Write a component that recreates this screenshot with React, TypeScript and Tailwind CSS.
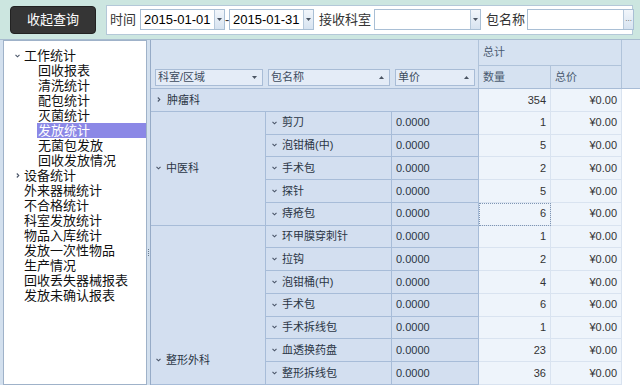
import React from "react";

type TreeNode = { label: string; open?: boolean; closed?: boolean; children?: string[] };

const tree: TreeNode[] = [
  {
    label: "工作统计",
    open: true,
    children: ["回收报表", "清洗统计", "配包统计", "灭菌统计", "发放统计", "无菌包发放", "回收发放情况"],
  },
  { label: "设备统计", closed: true },
  { label: "外来器械统计" },
  { label: "不合格统计" },
  { label: "科室发放统计" },
  { label: "物品入库统计" },
  { label: "发放一次性物品" },
  { label: "生产情况" },
  { label: "回收丢失器械报表" },
  { label: "发放未确认报表" },
];

const selected = "发放统计";

type Row = { name: string; qty: number; focus?: boolean };

const groups: { dept: string; rows: Row[] }[] = [
  {
    dept: "中医科",
    rows: [
      { name: "剪刀", qty: 1 },
      { name: "泡钳桶(中)", qty: 5 },
      { name: "手术包", qty: 2 },
      { name: "探针", qty: 5 },
      { name: "痔疮包", qty: 6, focus: true },
    ],
  },
  {
    dept: "整形外科",
    rows: [
      { name: "环甲膜穿刺针", qty: 1 },
      { name: "拉钩", qty: 2 },
      { name: "泡钳桶(中)", qty: 4 },
      { name: "手术包", qty: 6 },
      { name: "手术拆线包", qty: 1 },
      { name: "血透换药盘", qty: 23 },
      { name: "整形拆线包", qty: 36 },
    ],
  },
];

function ChevronDown({ className = "" }: { className?: string }) {
  return (
    <svg width="5" height="4" viewBox="0 0 5 4" className={className}>
      <path d="M0.5 0.8 L2.5 2.8 L4.5 0.8" fill="none" stroke="#4a5568" strokeWidth="1.1" />
    </svg>
  );
}

function ChevronRight({ className = "" }: { className?: string }) {
  return (
    <svg width="4" height="5" viewBox="0 0 4 5" className={className}>
      <path d="M0.8 0.5 L2.8 2.5 L0.8 4.5" fill="none" stroke="#4a5568" strokeWidth="1.1" />
    </svg>
  );
}

function Tri({ up }: { up?: boolean }) {
  return (
    <svg width="5" height="3" viewBox="0 0 5 3">
      <path d={up ? "M0 3 L2.5 0 L5 3 Z" : "M0 0 L5 0 L2.5 3 Z"} fill="#4b5563" />
    </svg>
  );
}

function PickerInput({ value, width, dots }: { value?: string; width: string; dots?: boolean }) {
  return (
    <div className={`${width} shrink-0 h-[21px] flex border border-[#a9bfd5] bg-white`}>
      <div className="flex-1 pl-[3px] text-[13px] leading-[19px] text-black">{value}</div>
      <div className="w-[10px] border-l border-[#b7c9db] bg-gradient-to-b from-[#f2f6fb] to-[#d7e3f0] flex items-center justify-center">
        {dots ? (
          <span className="text-[8px] leading-none text-[#555] -mt-[2px]">...</span>
        ) : (
          <Tri />
        )}
      </div>
    </div>
  );
}

function HeaderBox({ label, width, ml, up }: { label: string; width: string; ml: string; up?: boolean }) {
  return (
    <div
      className={`${width} ${ml} h-[17px] border border-[#a8bcd6] bg-[#e4ecf7] flex items-center justify-between pl-[2px] pr-[5px]`}
    >
      <span className="text-[11px] text-[#3d4b5e]">{label}</span>
      <Tri up={up} />
    </div>
  );
}

const dimCell = "bg-[#d3dff0] border-r border-b border-[#a7bcd8] text-[11px] text-[#2b3645]";
const valCell =
  "bg-[#eef4fb] border-r border-b border-[#d9e3f0] text-[11px] text-[#333] flex items-center justify-end pr-[4px]";

export default function App() {
  return (
    <div className="w-[640px] h-[385px] overflow-hidden flex flex-col bg-[#d3e0ee] font-['Liberation_Sans','Noto_Sans_CJK_SC',sans-serif]">
      {/* Top query bar */}
      <div className="h-[40px] shrink-0 bg-[#cce6e0] border-b border-[#a8bccf] flex items-center">
        <button className="ml-[10px] shrink-0 w-[86px] h-[28px] rounded-[4px] bg-[#353535] border border-[#222] text-white text-[13px]">
          收起查询
        </button>
        <div className="ml-[10px] w-[527px] shrink-0 h-[30px] bg-white border border-[#b4c8d8] flex items-center pl-[3px] text-[13px] text-[#333] whitespace-nowrap">
          <span className="shrink-0">时间</span>
          <div className="ml-[4px] shrink-0">
            <PickerInput value="2015-01-01" width="w-[85px]" />
          </div>
          <span className="w-[4px] shrink-0 text-center leading-none">-</span>
          <PickerInput value="2015-01-31" width="w-[85px]" />
          <span className="ml-[5px] shrink-0">接收科室</span>
          <div className="ml-[3px] shrink-0">
            <PickerInput width="w-[107px]" />
          </div>
          <span className="ml-[5px] shrink-0">包名称</span>
          <div className="ml-[2px] shrink-0">
            <PickerInput width="w-[107px]" dots />
          </div>
        </div>
      </div>

      <div className="flex-1 flex min-h-0">
        {/* Left tree */}
        <div className="ml-[3px] w-[144px] shrink-0 bg-white border border-[#9fb2c9] pt-[7px] text-[13px] text-[#111]">
          {tree.map((n) => (
            <div key={n.label}>
              <div className="h-[15px] flex items-center pl-[11px]">
                <span className="w-[5px] flex items-center justify-center">
                  {n.open && <ChevronDown />}
                  {n.closed && <ChevronRight />}
                </span>
                <span className="ml-[4px] leading-[15px]">{n.label}</span>
              </div>
              {n.open &&
                n.children?.map((c) => (
                  <div
                    key={c}
                    className={`ml-[33px] h-[15px] leading-[15px] pl-[1px] ${
                      c === selected ? "bg-[#8b88e6] text-white" : ""
                    }`}
                  >
                    {c}
                  </div>
                ))}
            </div>
          ))}
        </div>

        {/* Splitter */}
        <div className="w-[3px] shrink-0 flex items-center justify-center">
          <div className="flex flex-col gap-[1px] mt-[80px]">
            <span className="w-[1px] h-[1px] bg-[#6b7c90]" />
            <span className="w-[1px] h-[1px] bg-[#6b7c90]" />
            <span className="w-[1px] h-[1px] bg-[#6b7c90]" />
            <span className="w-[1px] h-[1px] bg-[#6b7c90]" />
          </div>
        </div>

        {/* Pivot grid */}
        <div className="flex-1 border-l border-[#96abc7] bg-white flex flex-col min-w-0">
          <div className="h-[49px] shrink-0 flex bg-[#d6e2f1] border-b border-[#a8bcd6]">
            <div className="w-[328px] border-r border-[#b0c3da] flex items-end pb-[2px]">
              <HeaderBox label="科室/区域" width="w-[108px]" ml="ml-[4px]" />
              <HeaderBox label="包名称" width="w-[122px]" ml="ml-[5px]" up />
              <HeaderBox label="单价" width="w-[80px]" ml="ml-[5px]" up />
            </div>
            <div className="w-[143px] flex flex-col border-r border-[#b0c3da]">
              <div className="h-[26px] border-b border-[#b0c3da] flex items-center pl-[4px] text-[11px] text-[#4a5a70]">
                总计
              </div>
              <div className="flex-1 flex text-[11px] text-[#4a5a70]">
                <div className="w-[72px] border-r border-[#b0c3da] flex items-center pl-[4px]">数量</div>
                <div className="flex-1 flex items-center pl-[4px]">总价</div>
              </div>
            </div>
            <div className="flex-1" />
          </div>

          <div className="flex-1 grid grid-cols-[115px_126px_87px_72px_71px_1fr] grid-rows-[repeat(13,22.75px)] overflow-hidden">
            <div className={`${dimCell} col-span-3 flex items-center pl-[6px] gap-[6px]`}>
              <ChevronRight />
              <span>肿瘤科</span>
            </div>
            <div className={valCell}>354</div>
            <div className={valCell}>¥0.00</div>
            <div />

            {groups.map((g) => (
              <React.Fragment key={g.dept}>
                {g.rows.map((r, i) => (
                  <React.Fragment key={g.dept + i}>
                    {i === 0 && (
                      <div
                        className={`${dimCell} flex gap-[5px] pl-[5px] ${
                          g.rows.length === 5 ? "row-span-5 items-center" : "row-span-7 items-end pb-[16px]"
                        }`}
                      >
                        <span className="h-[16px] flex items-center">
                          <ChevronDown />
                        </span>
                        <span className="leading-[16px]">{g.dept}</span>
                      </div>
                    )}
                    <div className={`${dimCell} flex items-center pl-[6px] gap-[5px]`}>
                      <ChevronDown />
                      <span>{r.name}</span>
                    </div>
                    <div className={`${dimCell} flex items-center pl-[4px]`}>0.0000</div>
                    <div
                      className={`${valCell} ${
                        r.focus ? "outline-1 outline-dotted -outline-offset-1 outline-[#7f95b3]" : ""
                      }`}
                    >
                      {r.qty}
                    </div>
                    <div className={valCell}>¥0.00</div>
                    <div />
                  </React.Fragment>
                ))}
              </React.Fragment>
            ))}
          </div>
        </div>
      </div>
    </div>
  );
}
